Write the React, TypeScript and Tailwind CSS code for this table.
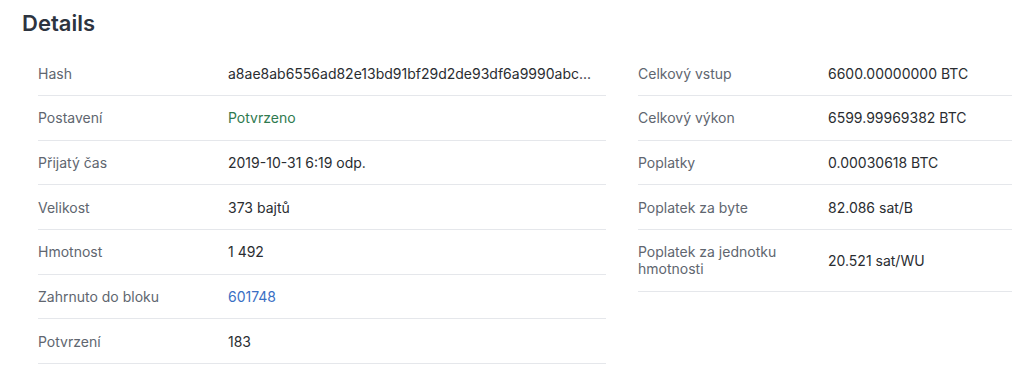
const left = [
  { label: "Hash", value: "a8ae8ab6556ad82e13bd91bf29d2de93df6a9990abc...", kind: "hash" },
  { label: "Postavení", value: "Potvrzeno", kind: "ok" },
  { label: "Přijatý čas", value: "2019-10-31 6:19 odp." },
  { label: "Velikost", value: "373 bajtů" },
  { label: "Hmotnost", value: "1 492" },
  { label: "Zahrnuto do bloku", value: "601748", kind: "link" },
  { label: "Potvrzení", value: "183" },
];

const right = [
  { label: "Celkový vstup", value: "6600.00000000 BTC" },
  { label: "Celkový výkon", value: "6599.99969382 BTC" },
  { label: "Poplatky", value: "0.00030618 BTC" },
  { label: "Poplatek za byte", value: "82.086 sat/B" },
  { label: "Poplatek za jednotku hmotnosti", value: "20.521 sat/WU" },
];

type Row = { label: string; value: string; kind?: string };

function Table({ rows, className }: { rows: Row[]; className: string }) {
  return (
    <div className={className}>
      {rows.map((r) => (
        <div
          key={r.label}
          className="flex items-center border-b border-[#e5e7eb] min-h-[44.67px] py-[13.25px] leading-[17px]"
        >
          <div className="w-[190px] shrink-0 pr-4 text-[#60666f]">
            {r.label}
          </div>
          <div
            className={
              r.kind === "ok"
                ? "flex-1 whitespace-nowrap text-[#2f7a4f]"
                : r.kind === "link"
                ? "flex-1 whitespace-nowrap text-[#3a6fc4]"
                : "flex-1 whitespace-nowrap text-[#2a2d31]"
            }
          >
            {r.value}
          </div>
        </div>
      ))}
    </div>
  );
}

export default function App() {
  return (
    <div className="w-[1012px] h-[370px] overflow-hidden bg-white font-['Inter',sans-serif] text-[14px]">
      <h2 className="pl-[22px] pt-[9px] text-[22px] leading-[28px] font-semibold text-[#2d3440]">
        Details
      </h2>
      <div className="flex gap-[32px] pl-[38px] pt-[14.5px]">
        <Table rows={left} className="w-[568px] shrink-0" />
        <Table rows={right} className="w-[568px] shrink-0" />
      </div>
    </div>
  );
}
